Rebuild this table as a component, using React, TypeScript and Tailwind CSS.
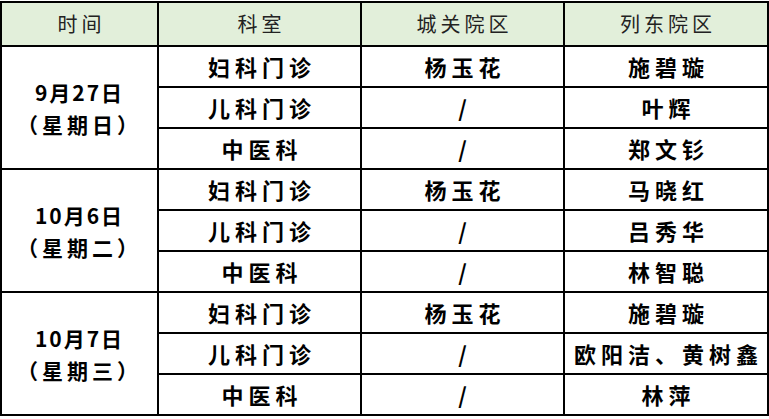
const schedule = [
  {
    date: "9月27日",
    week: "（星期日）",
    rows: [
      { dept: "妇科门诊", cg: "杨玉花", ld: "施碧璇" },
      { dept: "儿科门诊", cg: "/", ld: "叶辉" },
      { dept: "中医科", cg: "/", ld: "郑文钐" },
    ],
  },
  {
    date: "10月6日",
    week: "（星期二）",
    rows: [
      { dept: "妇科门诊", cg: "杨玉花", ld: "马晓红" },
      { dept: "儿科门诊", cg: "/", ld: "吕秀华" },
      { dept: "中医科", cg: "/", ld: "林智聪" },
    ],
  },
  {
    date: "10月7日",
    week: "（星期三）",
    rows: [
      { dept: "妇科门诊", cg: "杨玉花", ld: "施碧璇" },
      { dept: "儿科门诊", cg: "/", ld: "欧阳洁、黄树鑫" },
      { dept: "中医科", cg: "/", ld: "林萍" },
    ],
  },
];

const cell = "border-2 border-black text-center p-0";

export default function App() {
  return (
    <div
      className="w-[769px] h-[419px] bg-white pt-[1px]"
      style={{ fontFamily: '"Noto Sans CJK SC", "Noto Sans", sans-serif' }}
    >
      <table className="table-fixed border-collapse w-[767px] text-black">
        <colgroup>
          <col className="w-[157px]" />
          <col className="w-[203px]" />
          <col className="w-[203px]" />
          <col className="w-[204px]" />
        </colgroup>
        <thead>
          <tr className="h-[44px] bg-[#e2efda] text-[20px] tracking-[4px] text-[#222]">
            <th className={`${cell} font-normal pl-[4px]`}>时间</th>
            <th className={`${cell} font-normal pl-[4px]`}>科室</th>
            <th className={`${cell} font-normal pl-[4px]`}>城关院区</th>
            <th className={`${cell} font-normal pl-[4px]`}>列东院区</th>
          </tr>
        </thead>
        <tbody className="text-[22px] font-bold tracking-[5px]">
          {schedule.map((day) =>
            day.rows.map((row, i) => (
              <tr key={day.date + row.dept} className="h-[41px]">
                {i === 0 && (
                  <td rowSpan={3} className={`${cell} text-[21px] leading-[32px] tracking-[2px]`}>
                    <div>{day.date}</div>
                    <div className="tracking-[4px]">{day.week}</div>
                  </td>
                )}
                <td className={`${cell} pl-[5px]`}>{row.dept}</td>
                <td className={`${cell} pl-[5px]`}>{row.cg}</td>
                <td className={`${cell} pl-[5px]`}>{row.ld}</td>
              </tr>
            ))
          )}
        </tbody>
      </table>
    </div>
  );
}
